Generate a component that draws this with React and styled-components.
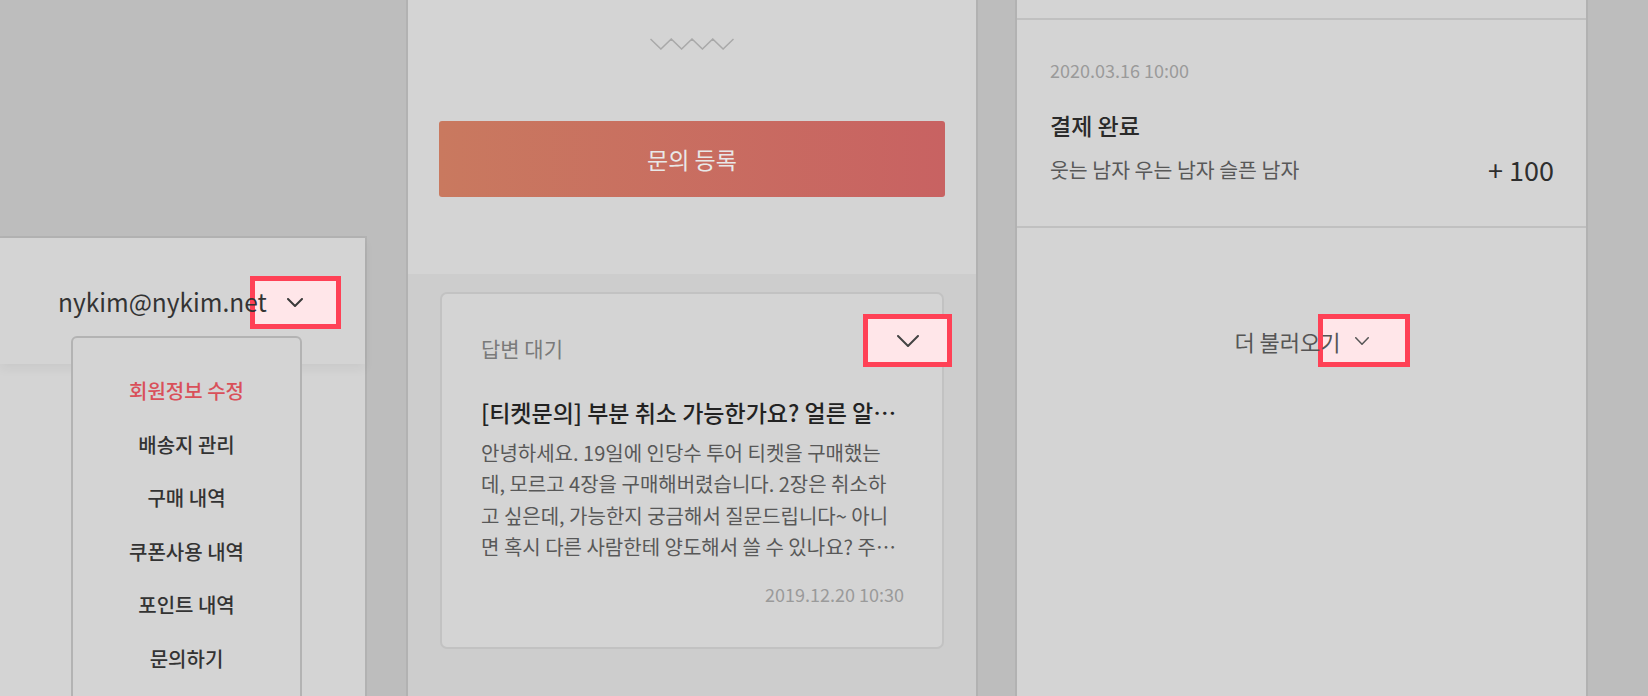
import React from "react";
import styled, { createGlobalStyle } from "styled-components";

const GlobalStyle = createGlobalStyle`
  body {
    margin: 0;
    background: #bdbdbd;
    font-family: "Noto Sans CJK KR", "Noto Sans", sans-serif;
  }
`;

const Page = styled.div`
  display: flex;
  align-items: flex-start;
  height: 696px;
  overflow: hidden;
  background: #bdbdbd;
`;

// left screen : account dropdown
const AccountPanel = styled.section`
  position: relative;
  flex: none;
  width: 365px;
  height: 460px;
  margin-top: 236px;
  background: #d4d4d4;
  border-top: 2px solid #b2b2b2;
  border-right: 2px solid #b2b2b2;
`;

const AccountHeader = styled.header`
  display: flex;
  align-items: center;
  height: 126px;
  padding-left: 58px;
  box-shadow: 0 5px 10px rgba(0, 0, 0, 0.05);
`;

const Email = styled.span`
  position: relative;
  z-index: 1;
  font-size: 24.5px;
  color: #333;
`;

const Hotspot = styled.span`
  display: inline-flex;
  align-items: center;
  justify-content: center;
  flex: none;
  box-sizing: border-box;
  width: ${(p) => p.$w || 91}px;
  height: 53px;
  border: 5px solid #ff4156;
  background: #ffe6e9;
`;

const HeaderToggle = styled(Hotspot)`
  margin-left: -17px;
  margin-right: -38px;
  margin-top: 2px;
`;

const Menu = styled.ul`
  position: absolute;
  top: 98px;
  left: 71px;
  width: 227px;
  margin: 0;
  padding: 26px 0;
  list-style: none;
  background: #d4d4d4;
  border: 2px solid #b3b3b3;
  border-radius: 6px;
`;

const MenuItem = styled.li`
  height: 53.6px;
  line-height: 53.6px;
  text-align: center;
  font-size: 20px;
  font-weight: 500;
  color: ${(p) => (p.$active ? "#d9505a" : "#333")};
`;

// middle screen : inquiry list
const InquiryPanel = styled.section`
  flex: none;
  display: flex;
  flex-direction: column;
  width: 568px;
  height: 696px;
  margin-left: 39px;
  border-left: 2px solid #b2b2b2;
  border-right: 2px solid #b2b2b2;
  background: #cdcdcd;
`;

const InquiryTop = styled.div`
  display: flex;
  flex-direction: column;
  align-items: center;
  height: 274px;
  padding: 38px 31px 0;
  box-sizing: border-box;
  background: #d4d4d4;
`;

const Zigzag = styled.svg`
  display: block;
  margin-bottom: 71px;
`;

const SubmitButton = styled.button`
  width: 100%;
  height: 76px;
  border: none;
  border-radius: 3px;
  background: linear-gradient(90deg, #c9795f 0%, #c86262 100%);
  color: #e8e8e8;
  font-family: inherit;
  font-size: 23px;
`;

const InquiryList = styled.div`
  padding: 18px 32px 0;
`;

const Card = styled.article`
  padding: 20px 38px 40px 39px;
  background: #d4d4d4;
  border: 2px solid #c2c2c2;
  border-radius: 7px;
`;

const CardHead = styled.div`
  display: flex;
  justify-content: space-between;
  align-items: flex-start;
`;

const Status = styled.span`
  position: relative;
  z-index: 1;
  margin-top: 19px;
  font-size: 21px;
  line-height: 30px;
  color: #7a7a7a;
`;

const CardToggle = styled(Hotspot)`
  margin-right: -48px;
`;

const CardTitle = styled.h3`
  margin: 29px 0 0;
  font-size: 23px;
  font-weight: 500;
  line-height: 32px;
  color: #222;
  white-space: nowrap;
  overflow: hidden;
  text-overflow: ellipsis;
`;

const CardBody = styled.p`
  margin: 9px 0 0;
  font-size: 20px;
  line-height: 31.3px;
  color: #585858;
  display: -webkit-box;
  -webkit-line-clamp: 4;
  -webkit-box-orient: vertical;
  overflow: hidden;
`;

const Stamp = styled.div`
  margin-top: 19px;
  text-align: ${(p) => (p.$right ? "right" : "left")};
  font-size: 18px;
  line-height: 26px;
  color: #9a9a9a;
`;

// right screen : point history
const PointPanel = styled.section`
  flex: none;
  width: 569px;
  height: 696px;
  margin-left: 37px;
  border-left: 2px solid #b2b2b2;
  border-right: 2px solid #b2b2b2;
  background: #d4d4d4;
`;

const PointItem = styled.div`
  margin-top: 18px;
  padding: 37px 32px 39px 33px;
  border-top: 2px solid #c0c0c0;
  border-bottom: 2px solid #c0c0c0;

  ${Stamp} {
    margin-top: 0;
  }
`;

const PointTitle = styled.h4`
  margin: 26px 0 0;
  font-size: 23px;
  font-weight: 500;
  line-height: 32px;
  color: #2a2a2a;
`;

const PointRow = styled.div`
  display: flex;
  justify-content: space-between;
  align-items: center;
  height: 36px;
  margin-top: 10px;
`;

const PointDesc = styled.span`
  font-size: 20.5px;
  color: #585858;
`;

const PointAmount = styled.span`
  font-size: 27px;
  color: #2e2e2e;
`;

const LoadMore = styled.div`
  display: flex;
  justify-content: center;
  align-items: center;
  padding-top: 86px;
`;

const LoadMoreText = styled.span`
  position: relative;
  z-index: 1;
  font-size: 22px;
  color: #555;
`;

const LoadMoreToggle = styled(Hotspot)`
  margin-left: -23px;
  margin-right: -41px;
  padding-right: 4px;
`;

function Chevron({ w, h, stroke = 2, color = "#3a3a3a" }) {
  return (
    <svg width={w} height={h} viewBox={`0 0 ${w} ${h}`} fill="none">
      <polyline
        points={`${stroke / 2},${stroke / 2} ${w / 2},${h - stroke / 2} ${w - stroke / 2},${stroke / 2}`}
        stroke={color}
        strokeWidth={stroke}
        strokeLinecap="round"
        strokeLinejoin="round"
      />
    </svg>
  );
}

const menuItems = ["회원정보 수정", "배송지 관리", "구매 내역", "쿠폰사용 내역", "포인트 내역", "문의하기"];

export default function App() {
  return (
    <>
      <GlobalStyle />
      <Page>
        <AccountPanel>
          <AccountHeader>
            <Email>nykim@nykim.net</Email>
            <HeaderToggle>
              <Chevron w={16} h={9} />
            </HeaderToggle>
          </AccountHeader>
          <Menu>
            {menuItems.map((item, i) => (
              <MenuItem key={item} $active={i === 0}>
                {item}
              </MenuItem>
            ))}
          </Menu>
        </AccountPanel>

        <InquiryPanel>
          <InquiryTop>
            <Zigzag width="84" height="12" viewBox="0 0 84 12">
              <polyline
                points="0.5,1 10.9,11 21.25,1 31.6,11 42,1 52.4,11 62.75,1 73.1,11 83.5,1"
                fill="none"
                stroke="#a9a9a9"
                strokeWidth="1.5"
              />
            </Zigzag>
            <SubmitButton>문의 등록</SubmitButton>
          </InquiryTop>
          <InquiryList>
            <Card>
              <CardHead>
                <Status>답변 대기</Status>
                <CardToggle $w={89}>
                  <Chevron w={22} h={12} color="#444" />
                </CardToggle>
              </CardHead>
              <CardTitle>[티켓문의] 부분 취소 가능한가요? 얼른 알려주세요</CardTitle>
              <CardBody>
                안녕하세요. 19일에 인당수 투어 티켓을 구매했는데, 모르고 4장을 구매해버렸습니다. 2장은 취소하고 싶은데, 가능한지
                궁금해서 질문드립니다~ 아니면 혹시 다른 사람한테 양도해서 쓸 수 있나요? 주말까지 답변 부탁드립니다.
              </CardBody>
              <Stamp $right>2019.12.20 10:30</Stamp>
            </Card>
          </InquiryList>
        </InquiryPanel>

        <PointPanel>
          <PointItem>
            <Stamp>2020.03.16 10:00</Stamp>
            <PointTitle>결제 완료</PointTitle>
            <PointRow>
              <PointDesc>웃는 남자 우는 남자 슬픈 남자</PointDesc>
              <PointAmount>+ 100</PointAmount>
            </PointRow>
          </PointItem>
          <LoadMore>
            <LoadMoreText>더 불러오기</LoadMoreText>
            <LoadMoreToggle $w={92}>
              <Chevron w={14} h={8} stroke={1.5} color="#555" />
            </LoadMoreToggle>
          </LoadMore>
        </PointPanel>
      </Page>
    </>
  );
}
